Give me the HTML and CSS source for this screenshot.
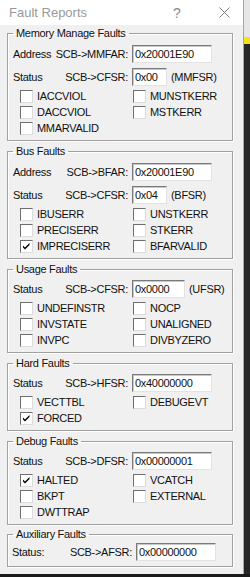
FILE: index.html
```html
<!DOCTYPE html>
<html>
<head lang="en">
    <meta charset="UTF-8">
    <title>Fault Reports</title>
    <link rel="stylesheet" href="styles.css">
</head>
<body>
<div class="window">
    <div class="titlebar">
        <span class="title">Fault Reports</span>
        <span class="help">?</span>
        <svg class="close" width="11" height="11" viewBox="0 0 11 11">
            <path d="M0.5 0.5 L10.5 10.5 M10.5 0.5 L0.5 10.5" stroke="#7a7a7a" stroke-width="1"/>
        </svg>
    </div>
    <div class="panel">
        <fieldset class="group">
            <legend>Memory Manage Faults</legend>
            <div class="inner">
                <div class="reg-row addr">
                    <div class="reg-label"><span>Address</span><span>SCB-&gt;MMFAR:</span></div>
                    <span class="field wide">0x20001E90</span>
                </div>
                <div class="reg-row">
                    <div class="reg-label"><span>Status</span><span>SCB-&gt;CFSR:</span></div>
                    <span class="field narrow">0x00</span>
                    <span class="suffix">(MMFSR)</span>
                </div>
                <div class="flags">
                    <div class="flag"><span class="box"></span>IACCVIOL</div>
                    <div class="flag"><span class="box"></span>MUNSTKERR</div>
                    <div class="flag"><span class="box"></span>DACCVIOL</div>
                    <div class="flag"><span class="box"></span>MSTKERR</div>
                    <div class="flag"><span class="box"></span>MMARVALID</div>
                </div>
            </div>
        </fieldset>

        <fieldset class="group">
            <legend>Bus Faults</legend>
            <div class="inner">
                <div class="reg-row addr">
                    <div class="reg-label"><span>Address</span><span>SCB-&gt;BFAR:</span></div>
                    <span class="field wide">0x20001E90</span>
                </div>
                <div class="reg-row">
                    <div class="reg-label"><span>Status</span><span>SCB-&gt;CFSR:</span></div>
                    <span class="field narrow">0x04</span>
                    <span class="suffix">(BFSR)</span>
                </div>
                <div class="flags">
                    <div class="flag"><span class="box"></span>IBUSERR</div>
                    <div class="flag"><span class="box"></span>UNSTKERR</div>
                    <div class="flag"><span class="box"></span>PRECISERR</div>
                    <div class="flag"><span class="box"></span>STKERR</div>
                    <div class="flag"><span class="box checked"><svg width="11" height="11" viewBox="0 0 11 11"><path d="M2 4.5 L4 6.5 L8.5 2 L8.5 4 L4 8.5 L2 6.5 Z" fill="#000"/></svg></span>IMPRECISERR</div>
                    <div class="flag"><span class="box"></span>BFARVALID</div>
                </div>
            </div>
        </fieldset>

        <fieldset class="group">
            <legend>Usage Faults</legend>
            <div class="inner">
                <div class="reg-row">
                    <div class="reg-label"><span>Status</span><span>SCB-&gt;CFSR:</span></div>
                    <span class="field medium">0x0000</span>
                    <span class="suffix">(UFSR)</span>
                </div>
                <div class="flags">
                    <div class="flag"><span class="box"></span>UNDEFINSTR</div>
                    <div class="flag"><span class="box"></span>NOCP</div>
                    <div class="flag"><span class="box"></span>INVSTATE</div>
                    <div class="flag"><span class="box"></span>UNALIGNED</div>
                    <div class="flag"><span class="box"></span>INVPC</div>
                    <div class="flag"><span class="box"></span>DIVBYZERO</div>
                </div>
            </div>
        </fieldset>

        <fieldset class="group">
            <legend>Hard Faults</legend>
            <div class="inner">
                <div class="reg-row">
                    <div class="reg-label"><span>Status</span><span>SCB-&gt;HFSR:</span></div>
                    <span class="field wide">0x40000000</span>
                </div>
                <div class="flags">
                    <div class="flag"><span class="box"></span>VECTTBL</div>
                    <div class="flag"><span class="box"></span>DEBUGEVT</div>
                    <div class="flag"><span class="box checked"><svg width="11" height="11" viewBox="0 0 11 11"><path d="M2 4.5 L4 6.5 L8.5 2 L8.5 4 L4 8.5 L2 6.5 Z" fill="#000"/></svg></span>FORCED</div>
                </div>
            </div>
        </fieldset>

        <fieldset class="group">
            <legend>Debug Faults</legend>
            <div class="inner">
                <div class="reg-row">
                    <div class="reg-label"><span>Status</span><span>SCB-&gt;DFSR:</span></div>
                    <span class="field wide">0x00000001</span>
                </div>
                <div class="flags">
                    <div class="flag"><span class="box checked"><svg width="11" height="11" viewBox="0 0 11 11"><path d="M2 4.5 L4 6.5 L8.5 2 L8.5 4 L4 8.5 L2 6.5 Z" fill="#000"/></svg></span>HALTED</div>
                    <div class="flag"><span class="box"></span>VCATCH</div>
                    <div class="flag"><span class="box"></span>BKPT</div>
                    <div class="flag"><span class="box"></span>EXTERNAL</div>
                    <div class="flag"><span class="box"></span>DWTTRAP</div>
                </div>
            </div>
        </fieldset>

        <fieldset class="group aux">
            <legend>Auxiliary Faults</legend>
            <div class="inner">
                <div class="reg-row">
                    <div class="reg-label"><span>Status:</span><span>SCB-&gt;AFSR:</span></div>
                    <span class="field wide">0x00000000</span>
                </div>
            </div>
        </fieldset>
    </div>
</div>
</body>
</html>
```

FILE: styles.css
```css
html{
    background: #1a1a1a;
}
body{
    margin: 0;
    font-family: "Liberation Sans", Arial, sans-serif;
    font-size: 11px;
    letter-spacing: -0.3px;
    color: #111;
    background: linear-gradient(#e6e6e6 0 37px, #f2e21c 37px 44px, #262626 44px) no-repeat;
    background-color: #1a1a1a;
}
.window{
    width: 244px;
    height: 574px;
    box-sizing: border-box;
    border-right: 1px solid #a8a8a8;
    background: #f0f0f0;
}
.titlebar{
    height: 25px;
    background: #fff;
    display: flex;
    align-items: center;
    color: #999;
}
.title{
    margin-left: 9px;
    font-size: 13px;
    letter-spacing: 0;
}
.help{
    margin-left: 86px;
    font-size: 14px;
    letter-spacing: 0;
    color: #8a8a8a;
}
.close{
    margin-left: 38px;
}
.panel{
    padding-bottom: 7px;
}
.group{
    margin: 3px 0 0 7px;
    padding: 0;
    width: 226px;
    box-sizing: border-box;
    min-inline-size: 0;
    border: 1px solid #a0a0a0;
    box-shadow: 1px 1px 0 #fff, inset 1px 1px 0 #fff;
}
.group:first-child{
    margin-top: 1px;
}
.group legend{
    margin-left: 5px;
    padding: 0 3px;
    line-height: 14px;
}
.inner{
    padding: 2px 0 4px 5px;
}
.reg-row{
    display: flex;
    align-items: center;
    height: 22px;
}
.reg-row.addr{
    height: 24px;
}
.reg-label{
    width: 115px;
    display: flex;
    justify-content: space-between;
}
.field{
    margin-left: 4px;
    height: 18px;
    box-sizing: border-box;
    padding-left: 2px;
    line-height: 16px;
    background: #fff;
    border: 1px solid;
    border-color: #7a7a7a #e3e3e3 #e3e3e3 #7a7a7a;
    box-shadow: inset 1px 1px 0 #c8c8c8;
}
.field.wide{
    width: 80px;
}
.field.narrow{
    width: 35px;
}
.field.medium{
    width: 53px;
}
.suffix{
    margin-left: 4px;
}
.flags{
    display: grid;
    grid-template-columns: 113px 1fr;
    padding-left: 7px;
}
.flag{
    height: 16px;
    display: flex;
    align-items: center;
}
.box{
    width: 13px;
    height: 13px;
    box-sizing: border-box;
    margin-right: 4px;
    background: #fff;
    border: 1px solid;
    border-color: #6e6e6e #dcdcdc #dcdcdc #6e6e6e;
    display: flex;
    align-items: center;
    justify-content: center;
}
.group.aux{
    margin-top: 2px;
}
.aux .inner{
    padding: 0 0 4px 4px;
}
.aux .reg-row{
    height: 21px;
}
.aux .reg-label{
    width: 120px;
}
```
